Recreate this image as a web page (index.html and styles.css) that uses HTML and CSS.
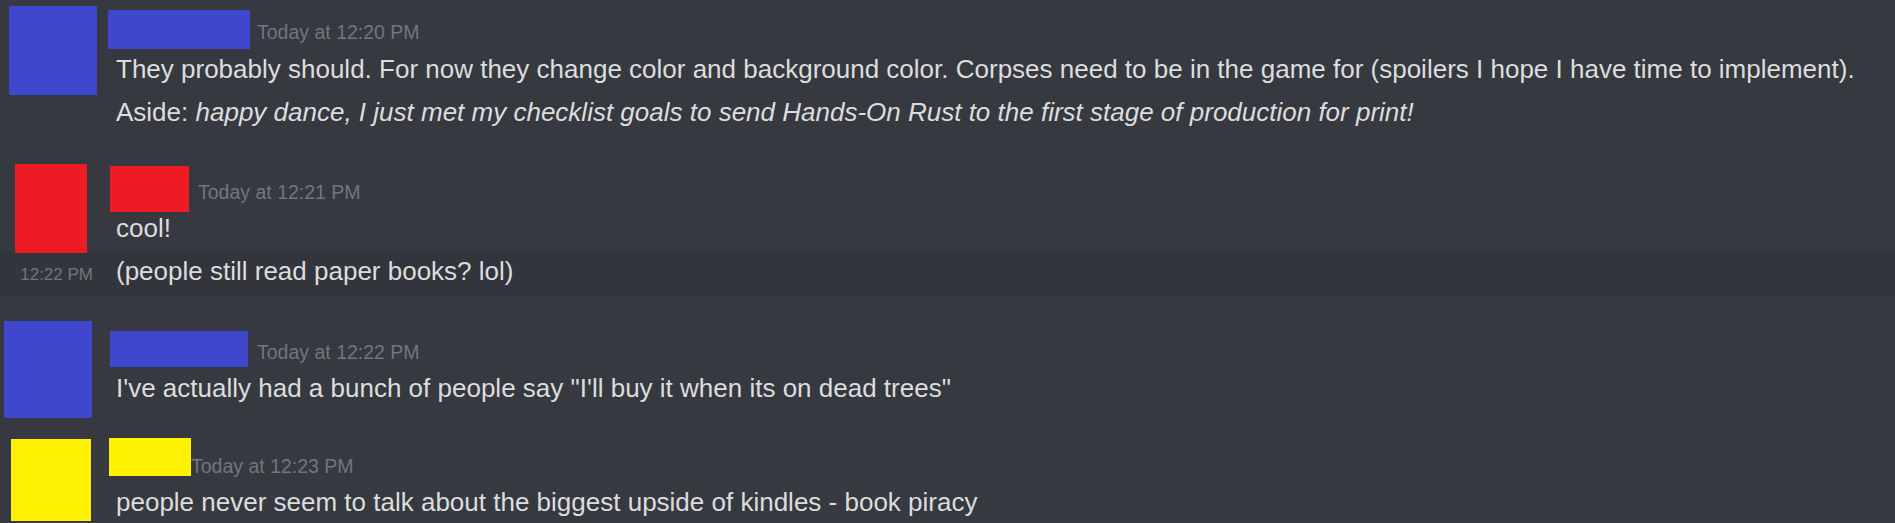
FILE: index.html
```html
<!DOCTYPE html>
<html lang="en">
<head>
<meta charset="utf-8">
<title>Chat</title>
<link rel="stylesheet" href="styles.css">
</head>
<body>
<div class="chat">

  <div class="group group-1">
    <div class="msg msg-first">
      <div class="gutter"><div class="avatar avatar-1"></div></div>
      <div class="body">
        <div class="header">
          <span class="name name-1"></span>
          <span class="ts ts-1">Today at 12:20 PM</span>
        </div>
        <div class="text">They probably should. For now they change color and background color. Corpses need to be in the game for (spoilers I hope I have time to implement).</div>
      </div>
    </div>
    <div class="msg">
      <div class="gutter"></div>
      <div class="body">
        <div class="text">Aside: <em>happy dance, I just met my checklist goals to send Hands-On Rust to the first stage of production for print!</em></div>
      </div>
    </div>
  </div>

  <div class="group group-2">
    <div class="msg msg-first">
      <div class="gutter"><div class="avatar avatar-2"></div></div>
      <div class="body">
        <div class="header">
          <span class="name name-2"></span>
          <span class="ts ts-2">Today at 12:21 PM</span>
        </div>
        <div class="text">cool!</div>
      </div>
    </div>
    <div class="msg msg-hover">
      <div class="gutter"><span class="hover-ts">12:22 PM</span></div>
      <div class="body">
        <div class="text">(people still read paper books? lol)</div>
      </div>
    </div>
  </div>

  <div class="group group-3">
    <div class="msg msg-first">
      <div class="gutter"><div class="avatar avatar-3"></div></div>
      <div class="body">
        <div class="header">
          <span class="name name-3"></span>
          <span class="ts ts-3">Today at 12:22 PM</span>
        </div>
        <div class="text">I've actually had a bunch of people say "I'll buy it when its on dead trees"</div>
      </div>
    </div>
  </div>

  <div class="group group-4">
    <div class="msg msg-first">
      <div class="gutter"><div class="avatar avatar-4"></div></div>
      <div class="body">
        <div class="header">
          <span class="name name-4"></span>
          <span class="ts ts-4">Today at 12:23 PM</span>
        </div>
        <div class="text">people never seem to talk about the biggest upside of kindles - book piracy</div>
      </div>
    </div>
  </div>

</div>
</body>
</html>
```
FILE: styles.css
```css
html, body {
  margin: 0;
  padding: 0;
  background: #36393f;
  height: 100%;
  overflow: hidden;
}

.chat {
  font-family: "Liberation Sans", Arial, sans-serif;
  color: #dcddde;
}

.group {
  margin-top: 24px;
}
.group-1 { margin-top: 0; }
.group-2 { margin-top: 23px; }

.msg {
  display: flex;
  align-items: flex-start;
}

.gutter {
  flex: none;
  width: 116px;
}

.body {
  flex: 1;
  min-width: 0;
}

.msg-first .body { padding-top: 20px; }
.group-2 .msg-first .body { padding-top: 23px; }

.text {
  font-size: 26px;
  line-height: 34px;
  padding: 4px 0 5px;
  white-space: nowrap;
}
.group-1 .msg-first .text { padding-top: 5px; }
.text em { font-style: italic; }

.header {
  display: flex;
  align-items: flex-end;
  height: 27px;
}

.name {
  display: block;
  flex: none;
  margin-top: -60px;
}
.name-1 { width: 142px; height: 39px; background: #3f48cc; margin-left: -8px; margin-bottom: -2px; }
.name-2 { width: 79px;  height: 46px; background: #ed1c24; margin-left: -6px; margin-bottom: -5px; }
.name-3 { width: 138px; height: 36px; background: #3f48cc; margin-left: -6px; margin-bottom: 0; }
.name-4 { width: 82px;  height: 38px; background: #fff200; margin-left: -7px; margin-bottom: 5px; }

.ts {
  font-size: 19.5px;
  line-height: 24px;
  color: #72767d;
  margin-bottom: 3px;
  white-space: nowrap;
}
.ts-1 { margin-left: 7px; }
.ts-2 { margin-left: 9px; }
.ts-3 { margin-left: 9px; }
.ts-4 { margin-left: 0; }

.avatar { margin-bottom: -200px; }
.avatar-1 { width: 88px; height: 89px; background: #3f48cc; margin-left: 9px;  margin-top: 6px; }
.avatar-2 { width: 72px; height: 89px; background: #ed1c24; margin-left: 15px; margin-top: 7px; }
.avatar-3 { width: 88px; height: 97px; background: #3f48cc; margin-left: 4px;  margin-top: 1px; }
.avatar-4 { width: 80px; height: 82px; background: #fff200; margin-left: 11px; margin-top: 5px; }

.msg-hover {
  background: #32353b;
  align-items: baseline;
  padding: 0 0 3px;
}
.msg-hover .gutter {
  text-align: right;
  padding-right: 23px;
  box-sizing: border-box;
}
.hover-ts {
  font-size: 17px;
  color: #72767d;
}
```
